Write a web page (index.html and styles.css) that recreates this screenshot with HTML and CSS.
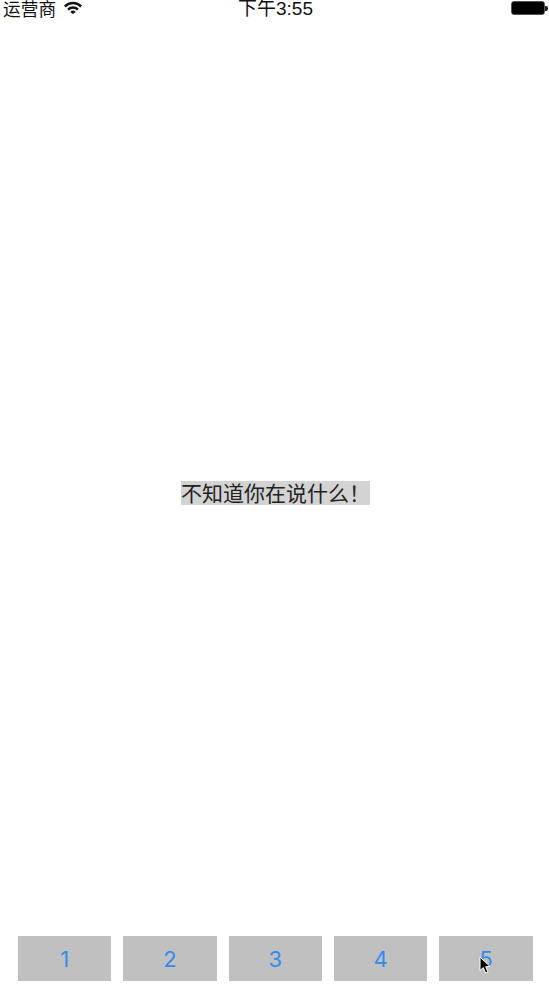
FILE: index.html
```html
<!DOCTYPE html>
<html lang="zh-CN">
<head>
    <meta charset="UTF-8" />
    <meta name="viewport" content="width=device-width, initial-scale=1.0" />
    <title>不知道你在说什么</title>
    <link rel="stylesheet" href="styles.css">
</head>
<body>

<div class="screen">
    <!-- Status bar -->
    <div class="status-bar">
        <div class="status-left">
            <span class="carrier">运营商</span>
            <svg class="wifi" width="18" height="13" viewBox="0 0 18 13">
                <path d="M0 4.6 A12.6 12.6 0 0 1 18 4.6 L16.3 6.4 A10.2 10.2 0 0 0 1.7 6.4 Z" fill="#111"/>
                <path d="M3.2 7.8 A8 8 0 0 1 14.8 7.8 L13.1 9.6 A5.6 5.6 0 0 0 4.9 9.6 Z" fill="#111"/>
                <path d="M6.3 10.9 A3.8 3.8 0 0 1 11.7 10.9 L9 13 Z" fill="#111"/>
            </svg>
        </div>
        <span class="clock">下午3:55</span>
        <div class="battery">
            <div class="battery-body"><div class="battery-fill"></div></div>
            <div class="battery-tip"></div>
        </div>
    </div>

    <!-- Message -->
    <div class="content">
        <span class="message">不知道你在说什么！</span>
    </div>

    <!-- Buttons -->
    <div class="toolbar">
        <button class="tool-btn">1</button>
        <button class="tool-btn">2</button>
        <button class="tool-btn">3</button>
        <button class="tool-btn">4</button>
        <button class="tool-btn">5</button>
    </div>

    <svg class="cursor" width="13" height="19" viewBox="0 0 13 19">
        <path d="M1 1 L1 14.5 L4.3 11.6 L6.6 17 L9 16 L6.7 10.7 L11 10.4 Z" fill="#000" stroke="#fff" stroke-width="1"/>
    </svg>
</div>

</body>
</html>
```

FILE: styles.css
```css
html, body {
    margin: 0;
    padding: 0;
    background-color: #fff;
}
body {
    font-family: "Liberation Sans", "Noto Sans CJK SC", sans-serif;
}
.screen {
    position: relative;
    display: flex;
    flex-direction: column;
    height: 986px;
    overflow: hidden;
}
.status-bar {
    display: flex;
    align-items: flex-start;
    height: 50px;
    padding: 0 1px 0 3px;
    color: #111;
    font-size: 18px;
    line-height: 18px;
}
.status-left {
    flex: 1;
    display: flex;
    align-items: flex-start;
}
.carrier {
    font-family: "Noto Sans CJK SC", sans-serif;
    font-size: 17.7px;
    margin-top: -1px;
}
.wifi {
    margin: 1px 0 0 8px;
}
.clock {
    font-family: "Liberation Sans", "Noto Sans CJK SC", sans-serif;
    font-size: 19px;
}
.battery {
    flex: 1;
    display: flex;
    justify-content: flex-end;
    align-items: center;
    margin-top: 1px;
}
.battery-body {
    box-sizing: border-box;
    width: 34px;
    height: 14px;
    padding: 0;
    border: 1px solid #555;
    border-radius: 3px;
}
.battery-fill {
    height: 100%;
    background-color: #000;
    border-radius: 1px;
}
.battery-tip {
    width: 3px;
    height: 5px;
    background-color: #222;
    border-radius: 0 2px 2px 0;
}
.content {
    flex: 1;
    display: flex;
    justify-content: center;
    align-items: center;
}
.message {
    width: 189px;
    height: 24px;
    margin-left: 2px;
    line-height: 22px;
    font-family: "Noto Sans CJK SC", sans-serif;
    font-size: 21px;
    color: #222;
    background-color: #d3d3d3;
    white-space: nowrap;
}
.toolbar {
    display: flex;
    gap: 12px;
    height: 50px;
    padding: 0 16.4px 0 18px;
}
.tool-btn {
    flex: 1;
    height: 45px;
    padding: 0;
    border: none;
    background-color: #c0c0c0;
    color: #338cec;
    font-family: "Inter", "Liberation Sans", sans-serif;
    font-size: 22px;
}
.cursor {
    position: absolute;
    left: 479px;
    top: 956px;
}
```
